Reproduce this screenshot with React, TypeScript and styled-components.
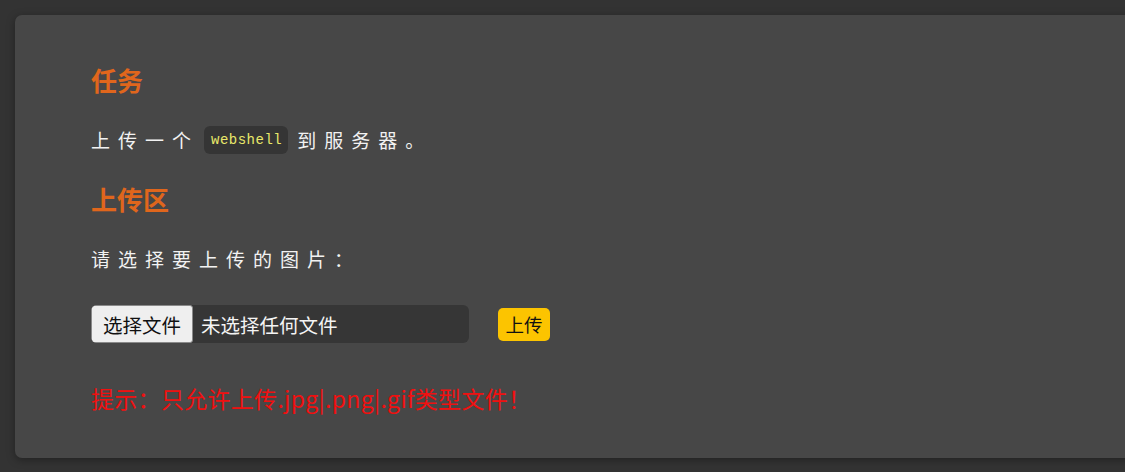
import React from "react";
import styled, { createGlobalStyle } from "styled-components";

const Global = createGlobalStyle`
  html, body { margin: 0; padding: 0; background: #333333; overflow: hidden; }
  body { font-family: "Noto Sans CJK SC", "Noto Sans", sans-serif; }
`;

const Page = styled.div`
  width: 1125px;
  height: 472px;
  padding: 15px 0 0 15px;
  box-sizing: border-box;
  overflow: hidden;
`;

const Panel = styled.section`
  width: 1160px;
  height: 443px;
  box-sizing: border-box;
  background: #474747;
  border-radius: 7px;
  box-shadow: 0 2px 8px rgba(0, 0, 0, 0.35);
  padding: 50px 76px;
  display: flex;
  flex-direction: column;
  align-items: flex-start;
`;

const Heading = styled.h2<{ $top?: number }>`
  margin: ${(p) => p.$top ?? 0}px 0 0;
  font-size: 26px;
  line-height: 30px;
  font-weight: 700;
  color: #e0661c;
`;

const Para = styled.p<{ $top: number }>`
  margin: ${(p) => p.$top}px 0 0;
  font-size: 19px;
  line-height: 30px;
  letter-spacing: 8px;
  color: #f2f2f2;
  display: flex;
  align-items: center;
`;

const Code = styled.code`
  font-family: "Liberation Mono", "DejaVu Sans Mono", monospace;
  font-size: 14px;
  font-weight: 400;
  letter-spacing: 0.5px;
  color: #e8e86a;
  background: #353535;
  border-radius: 6px;
  padding: 6px 6px 6px 7px;
  line-height: 16px;
  margin: 0 9px 0 5px;
`;

const Row = styled.div`
  margin-top: 31px;
  display: flex;
  align-items: center;
`;

const FileBox = styled.div`
  width: 378px;
  height: 38px;
  background: #363636;
  border-radius: 6px;
  display: flex;
  align-items: stretch;
  overflow: hidden;
`;

const ChooseButton = styled.span`
  width: 102px;
  box-sizing: border-box;
  background: #efefef;
  border: 1px solid #8a8a8a;
  border-radius: 3px;
  color: #111;
  font-size: 19.5px;
  display: flex;
  align-items: center;
  justify-content: center;
`;

const FileName = styled.span`
  color: #f4f4f4;
  font-size: 19.5px;
  display: flex;
  align-items: center;
  padding-left: 8px;
`;

const UploadButton = styled.button`
  margin-left: 29px;
  width: 52px;
  height: 33px;
  border: none;
  border-radius: 5px;
  background: #fcc400;
  color: #111;
  font-family: inherit;
  font-size: 18.5px;
  padding: 0;
  cursor: pointer;
`;

const Hint = styled.p`
  margin: 40px 0 0;
  font-size: 23px;
  line-height: 30px;
  letter-spacing: 0.3px;
  color: #f01010;
`;

export default function App() {
  return (
    <Page>
      <Global />
      <Panel>
        <Heading>任务</Heading>
        <Para $top={30}>
          上传一个<Code>webshell</Code>到服务器。
        </Para>
        <Heading $top={29}>上传区</Heading>
        <Para $top={30}>请选择要上传的图片：</Para>
        <Row>
          <FileBox>
            <ChooseButton>选择文件</ChooseButton>
            <FileName>未选择任何文件</FileName>
          </FileBox>
          <UploadButton>上传</UploadButton>
        </Row>
        <Hint>提示：只允许上传.jpg|.png|.gif类型文件！</Hint>
      </Panel>
    </Page>
  );
}
